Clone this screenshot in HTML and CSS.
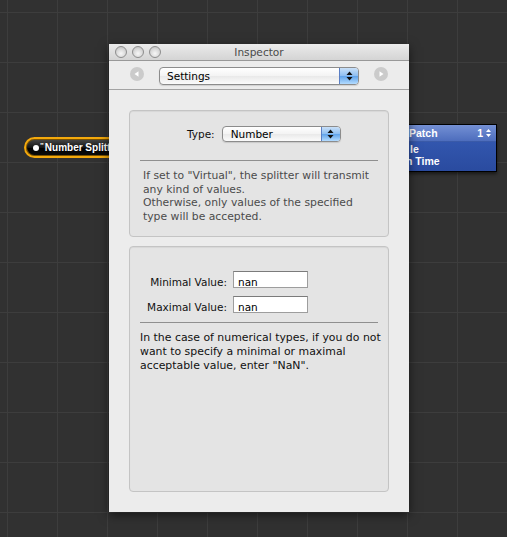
FILE: index.html
```html
<!DOCTYPE html>
<html>
<head>
<meta charset="utf-8">
<title>Inspector</title>
<link rel="stylesheet" href="styles.css">
</head>
<body>
<div class="canvas">
  <div class="node splitter"><span class="port"></span><span class="mark">"</span>Number Splitter</div>

  <div class="node patch">
    <div class="patch-head"><span class="patch-title">Patch</span><span class="patch-count">1 <svg class="mini-step" width="5" height="8" viewBox="0 0 5 8"><path d="M2.5 0 L5 3 L0 3 Z M0 5 L5 5 L2.5 8 Z" fill="#fff"/></svg></span></div>
    <div class="patch-body">
      <div class="patch-line pl1">le</div>
      <div class="patch-line pl2">n Time</div>
    </div>
  </div>

  <div class="window">
    <div class="titlebar">
      <div class="lights"><span class="light"></span><span class="light"></span><span class="light"></span></div>
      <div class="title">Inspector</div>
      <div></div>
    </div>
    <div class="toolbar">
      <svg class="nav-btn" width="14" height="14" viewBox="0 0 14 14"><circle cx="7" cy="7" r="7" fill="#cbcbcb"/><path d="M4.5 7 L8.5 4.3 L8.5 9.7 Z" fill="#fff"/></svg>
      <div class="popup popup-settings">
        <span class="popup-label">Settings</span>
        <span class="stepper"><svg width="7" height="10" viewBox="0 0 7 10"><path d="M3.5 0.5 L6.5 4 L0.5 4 Z M0.5 6 L6.5 6 L3.5 9.5 Z" fill="#111"/></svg></span>
      </div>
      <svg class="nav-btn" width="14" height="14" viewBox="0 0 14 14"><circle cx="7" cy="7" r="7" fill="#cbcbcb"/><path d="M9.5 7 L5.5 4.3 L5.5 9.7 Z" fill="#fff"/></svg>
    </div>
    <div class="content">
      <section class="box box-type">
        <div class="type-row">
          <span class="type-label">Type:</span>
          <div class="popup popup-type">
            <span class="popup-label">Number</span>
            <span class="stepper"><svg width="7" height="10" viewBox="0 0 7 10"><path d="M3.5 0.5 L6.5 4 L0.5 4 Z M0.5 6 L6.5 6 L3.5 9.5 Z" fill="#111"/></svg></span>
          </div>
        </div>
        <div class="sep"></div>
        <p class="note note-gray">If set to "Virtual", the splitter will transmit<br>any kind of values.<br>Otherwise, only values of the specified<br>type will be accepted.</p>
      </section>
      <section class="box box-range">
        <div class="fields">
          <span class="field-label">Minimal Value:</span><span class="field">nan</span>
          <span class="field-label">Maximal Value:</span><span class="field">nan</span>
        </div>
        <div class="sep sep-range"></div>
        <p class="note note-dark">In the case of numerical types, if you do not<br>want to specify a minimal or maximal<br>acceptable value, enter "NaN".</p>
      </section>
    </div>
  </div>
</div>
</body>
</html>
```

FILE: styles.css
```css
html, body {
  margin: 0;
  padding: 0;
}

body {
  width: 507px;
  height: 537px;
  overflow: hidden;
  background-color: #313131;
  background-image:
    linear-gradient(to right, #3d3d3d 1px, transparent 1px),
    linear-gradient(to bottom, #3d3d3d 1px, transparent 1px);
  background-size: 50px 50px;
  background-position: 7px 12px;
  font-family: "DejaVu Sans", "Liberation Sans", sans-serif;
}

.canvas {
  position: relative;
  width: 507px;
  height: 537px;
}

/* ---------- diagram nodes ---------- */
.node {
  position: absolute;
  font-family: "Liberation Sans", "DejaVu Sans", sans-serif;
  font-weight: bold;
  font-size: 10px;
  color: #fff;
}

.splitter {
  left: 24px;
  top: 137px;
  width: 130px;
  height: 17px;
  border: 2px solid #f4a90c;
  border-radius: 11px;
  background: linear-gradient(#4a4a4a, #151515 50%, #000 51%, #0c0c0c);
  box-shadow: 0 0 0 1px #7a5200 inset;
  display: flex;
  align-items: center;
  padding-left: 7px;
  box-sizing: content-box;
}

.port {
  width: 6px;
  height: 6px;
  border-radius: 50%;
  background: #fff;
  flex: none;
}

.mark {
  font-size: 8px;
  margin: 0 1px 0 1px;
  position: relative;
  top: -2px;
}

.patch {
  left: 340px;
  top: 124px;
  width: 155px;
  border: 1px solid #000;
  background: #2b4fa6;
  box-shadow: 0 2px 3px rgba(0, 0, 0, 0.5);
}

.patch-head {
  height: 16px;
  background: linear-gradient(#7490d4, #4d6dbd);
  border-bottom: 1px solid #3a5aa8;
  display: flex;
  align-items: center;
  justify-content: space-between;
  padding: 0 5px 0 68px;
  font-size: 10.5px;
}

.patch-count {
  display: flex;
  align-items: center;
  gap: 3px;
}

.patch-body {
  padding: 2px 0 4px 0;
  background: linear-gradient(#3256ae, #2a4b9f);
}

.patch-line {
  height: 11.5px;
  line-height: 11.5px;
  font-size: 10.5px;
}

.pl1 { padding-left: 69px; }
.pl2 { padding-left: 65px; }

/* ---------- inspector window ---------- */
.window {
  position: absolute;
  left: 109px;
  top: 44px;
  width: 300px;
  height: 468px;
  background: #ececec;
  display: flex;
  flex-direction: column;
  box-shadow: 0 3px 10px rgba(0, 0, 0, 0.55);
}

.titlebar {
  height: 16px;
  flex: none;
  display: grid;
  grid-template-columns: 1fr auto 1fr;
  align-items: center;
  background: linear-gradient(#ebebeb, #d4d4d4);
  border-bottom: 1px solid #989898;
}

.lights {
  display: flex;
  gap: 5px;
  padding-left: 6px;
}

.light {
  width: 10px;
  height: 10px;
  border-radius: 50%;
  border: 1px solid #8e8e8e;
  background: radial-gradient(circle at 50% 65%, #f7f7f7 0, #dedede 45%, #b9b9b9 100%);
}

.title {
  font-size: 10.6px;
  color: #4a4a4a;
}

.toolbar {
  height: 28px;
  flex: none;
  display: flex;
  align-items: center;
  gap: 15px;
  padding-left: 21px;
  border-bottom: 1px solid #a3a3a3;
  background: #ececec;
}

.nav-btn {
  flex: none;
  position: relative;
  top: -1px;
}

.popup {
  display: flex;
  align-items: stretch;
  box-sizing: border-box;
  border: 1px solid #8c8c8c;
  border-radius: 4px;
  background: linear-gradient(#ffffff, #f3f3f3 50%, #e9e9e9 51%, #fbfbfb);
  overflow: hidden;
  box-shadow: 0 1px 1px rgba(0, 0, 0, 0.12);
}

.popup-settings {
  width: 200px;
  height: 18px;
  margin-top: 2px;
}

.popup-label {
  flex: 1;
  display: flex;
  align-items: center;
  font-size: 10.5px;
  color: #000;
}

.popup-settings .popup-label { padding-left: 7px; }

.stepper {
  width: 18px;
  flex: none;
  display: flex;
  align-items: center;
  justify-content: center;
  border-left: 1px solid #5b7fc4;
  background: linear-gradient(#c9e0f8, #8cbdf1 50%, #5fa2ea 51%, #b4dcff);
}

.content {
  flex: 1;
  display: flex;
  flex-direction: column;
  gap: 9px;
  padding: 20px 20px 20px 20px;
}

.box {
  border: 1px solid #c4c4c4;
  border-radius: 4px;
  background: #e4e4e4;
  box-shadow: inset 0 1px 1px rgba(0, 0, 0, 0.06);
}

.box-type {
  height: 127px;
  box-sizing: border-box;
  flex: none;
  padding-top: 15px;
}

.box-range {
  flex: 1;
  padding-top: 24px;
}

.type-row {
  display: flex;
  align-items: center;
  gap: 7px;
  padding-left: 57px;
}

.type-label {
  font-size: 10.5px;
  color: #111;
}

.popup-type {
  width: 119px;
  height: 16px;
}

.popup-type .popup-label { padding-left: 8px; }

.sep {
  height: 1px;
  background: #8f8f8f;
  margin: 18px 10px 0 10px;
}

.sep-range { margin-top: 9px; }

.note {
  margin: 8px 0 0 0;
  font-size: 10.8px;
  line-height: 13.5px;
  white-space: nowrap;
}

.note-gray {
  color: #4b4b4b;
  padding-left: 13px;
}

.note-dark {
  color: #111;
  padding-left: 10px;
  line-height: 14px;
  margin-top: 8px;
  font-size: 10.9px;
}

.fields {
  display: grid;
  grid-template-columns: 84px 75px;
  column-gap: 6px;
  row-gap: 8px;
  align-items: center;
  padding-left: 13px;
}

.field-label {
  text-align: right;
  font-size: 10.5px;
  color: #111;
  position: relative;
  top: 2px;
}

.field {
  height: 17px;
  box-sizing: border-box;
  background: #fff;
  border: 1px solid #9d9d9d;
  border-top-color: #7b7b7b;
  font-size: 10.5px;
  padding: 4px 0 0 4px;
  line-height: 12px;
  color: #000;
}
```
